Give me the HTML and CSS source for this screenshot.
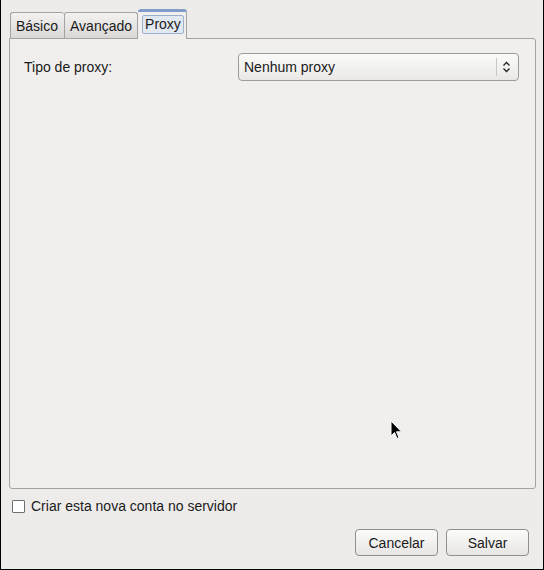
FILE: index.html
```html
<!DOCTYPE html>
<html lang="pt">
<head>
    <meta charset="UTF-8">
    <title>Proxy</title>
    <link rel="stylesheet" href="styles.css">
</head>
<body>
<div class="window">
    <div class="tabs">
        <div class="tab first">Básico</div>
        <div class="tab">Avançado</div>
        <div class="tab active"><span class="tab-label">Proxy</span></div>
    </div>
    <div class="panel">
        <div class="row">
            <label class="row-label">Tipo de proxy:</label>
            <div class="combo">
                <span class="combo-text">Nenhum proxy</span>
                <span class="combo-sep"></span>
                <svg class="combo-arrow" width="9" height="12" viewBox="0 0 9 12">
                    <path d="M1.5 4.5 L4.5 1.5 L7.5 4.5 M1.5 7.5 L4.5 10.5 L7.5 7.5" fill="none" stroke="#222" stroke-width="1.3"/>
                </svg>
            </div>
        </div>
        <svg class="cursor" width="14" height="22" viewBox="0 0 14 22">
            <path d="M1 1 L1 16 L4.5 12.5 L7 18.5 L9 17.5 L6.5 11.8 L11.5 11.8 Z" fill="#000" stroke="#fff" stroke-width="1"/>
        </svg>
    </div>
    <div class="check-row">
        <span class="checkbox"></span>
        <span>Criar esta nova conta no servidor</span>
    </div>
    <div class="buttons">
        <button class="btn">Cancelar</button>
        <button class="btn">Salvar</button>
    </div>
</div>
</body>
</html>
```

FILE: styles.css
```css
body {
    margin: 0;
    padding: 0;
    font-family: "Liberation Sans", Arial, sans-serif;
    font-size: 14px;
    color: #1a1a1a;
}
.window {
    box-sizing: border-box;
    width: 544px;
    height: 570px;
    background-color: #edeceb;
    border: 1px solid #000;
    border-top: none;
    padding: 9px 8px 0 8px;
    display: flex;
    flex-direction: column;
}
.tabs {
    display: flex;
    align-items: flex-end;
    height: 29px;
    padding-left: 1px;
    position: relative;
    z-index: 1;
}
.tab {
    box-sizing: border-box;
    height: 26px;
    padding: 2px 5px 0 5px;
    line-height: 22px;
    border: 1px solid #a3a3a3;
    border-bottom: none;
    border-right: none;
    border-radius: 3px 3px 0 0;
    background: linear-gradient(#f3f2f1, #d9d8d6);
}
.tab.first {
    padding-left: 5px;
    padding-right: 6px;
}
.tab:nth-child(2) {
    border-right: 1px solid #a3a3a3;
}
.tab.active {
    height: 30px;
    margin-bottom: -1px;
    padding: 3px 2px 0 4px;
    line-height: normal;
    background: #f0efee;
    border: 1px solid #a3a3a3;
    border-top: 3px solid #7f9dc8;
    border-bottom: none;
    border-left: none;
}
.tab-label {
    display: block;
    box-sizing: border-box;
    height: 19px;
    line-height: 17px;
    padding: 0 2px;
    background-color: #e2e8f1;
    border: 1px solid #9cb0cc;
    border-radius: 2px;
}
.panel {
    box-sizing: border-box;
    height: 451px;
    width: 527px;
    background-color: #f0efee;
    border: 1px solid #a3a3a3;
    border-radius: 0 3px 3px 3px;
    padding: 14px 15px 0 14px;
    position: relative;
}
.row {
    display: flex;
    align-items: center;
    justify-content: space-between;
}
.combo {
    box-sizing: border-box;
    width: 281px;
    height: 28px;
    display: flex;
    align-items: center;
    border: 1px solid #9c9c9c;
    border-radius: 4px;
    background: linear-gradient(#fbfbfa, #e9e8e6);
    padding-left: 5px;
    margin-right: 1px;
}
.combo-text {
    flex: 1;
}
.combo-sep {
    width: 1px;
    height: 18px;
    background-color: #c8c7c5;
    margin-right: 5px;
}
.combo-arrow {
    margin-right: 7px;
}
.cursor {
    position: absolute;
    left: 380px;
    top: 381px;
}
.check-row {
    display: flex;
    align-items: center;
    margin-top: 9px;
    padding-left: 3px;
    height: 16px;
}
.checkbox {
    box-sizing: border-box;
    width: 13px;
    height: 13px;
    border: 1px solid #707070;
    background-color: #fff;
    border-radius: 1px;
    margin-right: 6px;
}
.buttons {
    display: flex;
    justify-content: flex-end;
    gap: 8px;
    margin-top: 15px;
    padding-right: 6px;
}
.btn {
    box-sizing: border-box;
    width: 83px;
    height: 27px;
    font-family: "Liberation Sans", Arial, sans-serif;
    font-size: 14px;
    color: #1a1a1a;
    border: 1px solid #8f8f8f;
    border-radius: 4px;
    background: linear-gradient(#fcfcfb, #e6e5e3);
    padding: 0;
}
```
